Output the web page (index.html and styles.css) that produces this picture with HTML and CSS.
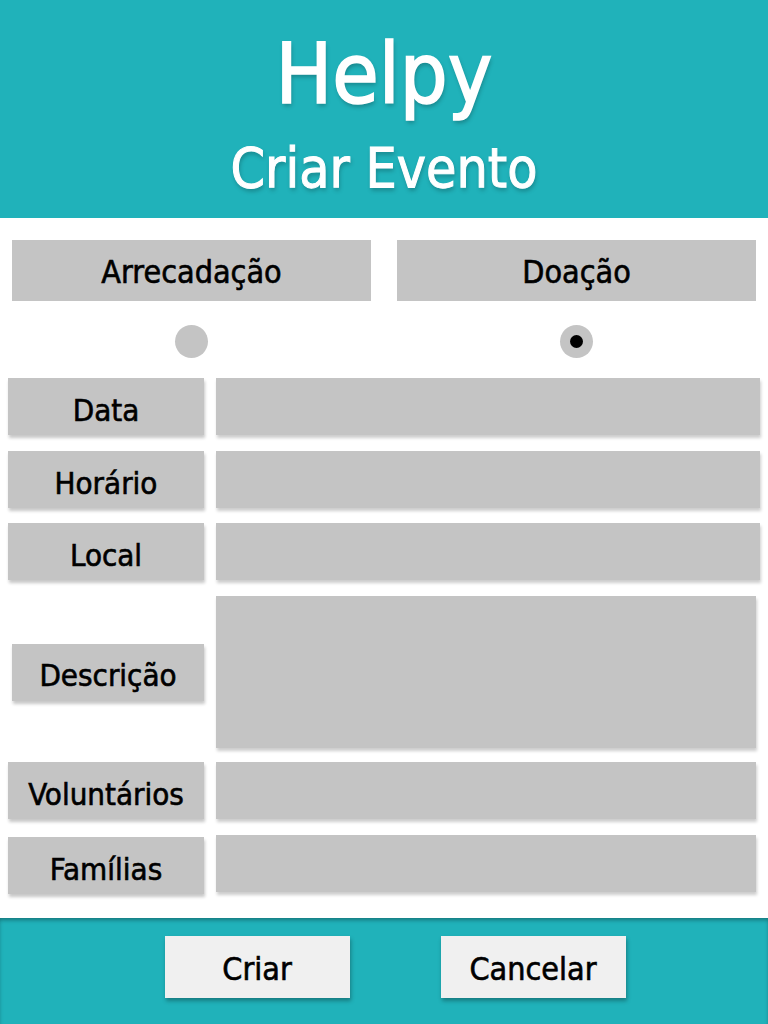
FILE: index.html
```html
<!DOCTYPE html>
<html lang="pt">
<head>
<meta charset="utf-8">
<title>Helpy - Criar Evento</title>
<link rel="stylesheet" href="styles.css">
</head>
<body>
<div class="page">
  <header class="header">
    <h1 class="brand">Helpy</h1>
    <h2 class="subtitle">Criar Evento</h2>
  </header>
  <main class="content">
    <div class="tabs">
      <div class="tab-col">
        <div class="tab">Arrecadação</div>
        <span class="radio"></span>
      </div>
      <div class="tab-col">
        <div class="tab">Doação</div>
        <span class="radio checked"></span>
      </div>
    </div>
    <div class="form">
      <div class="row r-data">
        <div class="label">Data</div>
        <div class="field"></div>
      </div>
      <div class="row r-hora">
        <div class="label">Horário</div>
        <div class="field"></div>
      </div>
      <div class="row r-local">
        <div class="label">Local</div>
        <div class="field"></div>
      </div>
      <div class="row r-desc">
        <div class="label label-desc">Descrição</div>
        <div class="field field-desc"></div>
      </div>
      <div class="row r-vol">
        <div class="label">Voluntários</div>
        <div class="field field-narrow"></div>
      </div>
      <div class="row r-fam">
        <div class="label label-fam">Famílias</div>
        <div class="field field-narrow field-fam"></div>
      </div>
    </div>
  </main>
  <footer class="footer">
    <button class="btn">Criar</button>
    <button class="btn">Cancelar</button>
  </footer>
</div>
</body>
</html>
```
FILE: styles.css
```css
* { box-sizing: border-box; }
html, body { margin: 0; padding: 0; }
body {
  font-family: "DejaVu Sans Condensed", "DejaVu Sans", sans-serif;
  background: #ffffff;
  color: #000;
}
.page {
  width: 768px;
  height: 1024px;
  display: flex;
  flex-direction: column;
  overflow: hidden;
}
.header {
  height: 218px;
  background: #20b2ba;
  display: flex;
  flex-direction: column;
  align-items: center;
  color: #fff;
}
.brand {
  margin: 24px 0 0 0;
  font-size: 84px;
  line-height: 100px;
  font-weight: 400;
  -webkit-text-stroke: 1.6px #fff;
  text-shadow: 1px 3px 4px rgba(0,0,0,0.25);
}
.subtitle {
  margin: 14px 0 0 0;
  font-size: 55px;
  line-height: 60px;
  font-weight: 400;
  -webkit-text-stroke: 1px #fff;
  text-shadow: 1px 3px 4px rgba(0,0,0,0.25);
}
.content {
  flex: 1;
  padding: 22px 0 0 0;
}
.tabs {
  display: flex;
  gap: 26px;
  padding: 0 12px;
}
.tab-col {
  width: 359px;
  display: flex;
  flex-direction: column;
  align-items: center;
}
.tab {
  width: 100%;
  height: 61px;
  background: #c4c4c4;
  display: flex;
  align-items: center;
  justify-content: center;
  font-size: 32px;
  -webkit-text-stroke: 0.6px #000;
  padding-top: 2px;
}
.radio {
  margin-top: 24px;
  width: 33px;
  height: 33px;
  border-radius: 50%;
  background: #c4c4c4;
  display: flex;
  align-items: center;
  justify-content: center;
}
.radio.checked::after {
  content: "";
  width: 13px;
  height: 13px;
  border-radius: 50%;
  background: #000;
}
.form {
  margin-top: 20px;
  padding: 0 8px;
  display: flex;
  flex-direction: column;
}
.row {
  display: flex;
  align-items: center;
  gap: 12px;
}
.r-hora { margin-top: 16px; }
.r-local { margin-top: 15px; }
.r-desc { margin-top: 16px; }
.r-vol { margin-top: 14px; }
.r-fam { margin-top: 14px; }
.label {
  width: 196px;
  height: 57px;
  flex: none;
  background: #c4c4c4;
  display: flex;
  align-items: center;
  justify-content: center;
  font-size: 31px;
  -webkit-text-stroke: 0.6px #000;
  padding-top: 6px;
  box-shadow: 1px 3px 3px rgba(0,0,0,0.22);
}
.label-desc {
  width: 192px;
  margin-left: 4px;
  padding-top: 6px;
}
.label-fam { margin-top: 4px; }
.field {
  flex: 1;
  height: 57px;
  background: #c4c4c4;
  box-shadow: 1px 3px 3px rgba(0,0,0,0.2);
}
.field-desc {
  height: 152px;
  margin-right: 4px;
}
.field-narrow { margin-right: 4px; }
.footer {
  height: 106px;
  flex: none;
  margin-top: auto;
  background: #20b2ba;
  box-shadow: inset 0 3px 4px -1px rgba(0,0,0,0.35);
  display: flex;
  justify-content: center;
  gap: 91px;
  padding: 18px 0 0 22px;
}
.btn {
  width: 185px;
  height: 62px;
  border: none;
  border-radius: 0;
  background: #f0f0f0;
  font-family: "DejaVu Sans Condensed", "DejaVu Sans", sans-serif;
  font-size: 32px;
  -webkit-text-stroke: 0.6px #000;
  color: #000;
  padding: 4px 0 0 0;
  box-shadow: 1px 3px 4px rgba(0,0,0,0.3);
}
```
